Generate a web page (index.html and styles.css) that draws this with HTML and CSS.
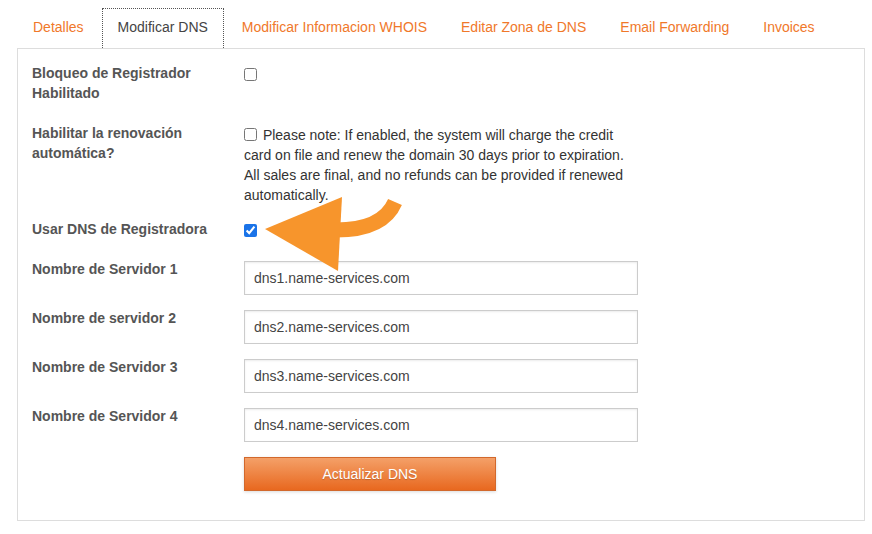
FILE: index.html
```html
<!DOCTYPE html>
<html lang="es">
<head>
    <meta charset="UTF-8">
    <meta name="viewport" content="width=device-width, initial-scale=1.0">
    <title>Modificar DNS</title>
    <link rel="stylesheet" href="styles.css">
</head>
<body>
    <div class="page">
        <ul class="tabs">
            <li><a href="#">Detalles</a></li>
            <li class="active"><a href="#">Modificar DNS</a></li>
            <li><a href="#">Modificar Informacion WHOIS</a></li>
            <li><a href="#">Editar Zona de DNS</a></li>
            <li><a href="#">Email Forwarding</a></li>
            <li><a href="#">Invoices</a></li>
        </ul>

        <div class="panel">
            <div class="row row-lock">
                <label class="row-label">Bloqueo de Registrador Habilitado</label>
                <div class="row-value"><input type="checkbox" class="check"></div>
            </div>
            <div class="row row-renew">
                <label class="row-label">Habilitar la renovación automática?</label>
                <div class="row-value note">
                    <input type="checkbox" class="check inline"> Please note: If enabled, the system will charge the credit card on file and renew the domain 30 days prior to expiration. All sales are final, and no refunds can be provided if renewed automatically.
                </div>
            </div>
            <div class="row row-dns">
                <label class="row-label">Usar DNS de Registradora</label>
                <div class="row-value"><input type="checkbox" class="check" checked></div>
            </div>
            <div class="row field">
                <label class="row-label">Nombre de Servidor 1</label>
                <div class="row-value"><input type="text" class="text-input" value="dns1.name-services.com"></div>
            </div>
            <div class="row field">
                <label class="row-label">Nombre de servidor 2</label>
                <div class="row-value"><input type="text" class="text-input" value="dns2.name-services.com"></div>
            </div>
            <div class="row field">
                <label class="row-label">Nombre de Servidor 3</label>
                <div class="row-value"><input type="text" class="text-input" value="dns3.name-services.com"></div>
            </div>
            <div class="row field">
                <label class="row-label">Nombre de Servidor 4</label>
                <div class="row-value"><input type="text" class="text-input" value="dns4.name-services.com"></div>
            </div>
            <div class="row actions">
                <div class="row-label"></div>
                <div class="row-value"><button class="btn-update">Actualizar DNS</button></div>
            </div>
        </div>

        <!-- flecha de aviso encima del checkbox -->
        <svg class="pointer" width="150" height="90" viewBox="0 0 150 90">
            <path d="M76 40 Q123 40 135 12" fill="none" stroke="#f7952c" stroke-width="15"/>
            <polygon points="5,39 82,7 78,81" fill="#f7952c"/>
        </svg>
    </div>
</body>
</html>
```

FILE: styles.css
```css
body {
    margin: 0;
    font-family: "Liberation Sans", Arial, sans-serif;
    font-size: 14px;
    color: #333;
    background: #fff;
}
.page {
    position: relative;
    padding: 8px 7px 0 17px;
}
.tabs {
    display: flex;
    gap: 2px;
    list-style: none;
    margin: 0;
    padding: 0;
}
.tabs li a {
    display: block;
    height: 40px;
    line-height: 37px;
    padding: 0 15px;
    color: #f0782a;
    text-decoration: none;
    border: 1px solid transparent;
    border-bottom: none;
    box-sizing: border-box;
}
.tabs li.active a {
    color: #444;
    border: 1px dotted #555;
    border-bottom: none;
    background: #fff;
}
.panel {
    border: 1px solid #ddd;
    padding: 14px 14px 29px 14px;
}
.row {
    display: flex;
    align-items: flex-start;
    line-height: 20px;
    margin-bottom: 15px;
}
.row-label {
    width: 212px;
    font-weight: bold;
    color: #555;
    padding-right: 20px;
    box-sizing: border-box;
}
.row-value {
    flex: 1;
}
.row-lock {
    margin-bottom: 20px;
}
.row-renew {
    margin-bottom: 14px;
}
.row-renew .row-value {
    padding-top: 2px;
    max-width: 385px;
}
.row-dns {
    margin-bottom: 22px;
}
.note {
    color: #333;
}
.check {
    width: 13px;
    height: 13px;
    margin: 5px 0 0 0;
    accent-color: #1a73e8;
    vertical-align: top;
}
.check.inline {
    margin: 3px 2px 0 0;
}
.field .row-label {
    margin-top: -2px;
}
.text-input {
    width: 394px;
    height: 34px;
    box-sizing: border-box;
    border: 1px solid #ccc;
    box-shadow: inset 0 1px 2px rgba(0, 0, 0, 0.08);
    padding: 0 9px;
    font-family: "Liberation Sans", Arial, sans-serif;
    font-size: 14px;
    color: #444;
    display: block;
}
.actions {
    margin-bottom: 0;
}
.btn-update {
    width: 252px;
    height: 34px;
    border: 1px solid #d2682c;
    background: linear-gradient(#f4a068, #e8681f);
    color: #fff;
    font-family: "Liberation Sans", Arial, sans-serif;
    font-size: 14px;
    text-shadow: 0 1px 1px rgba(0, 0, 0, 0.2);
    box-shadow: 0 1px 3px rgba(0, 0, 0, 0.15);
    cursor: pointer;
    display: block;
}
.pointer {
    position: absolute;
    left: 260px;
    top: 190px;
}
```
